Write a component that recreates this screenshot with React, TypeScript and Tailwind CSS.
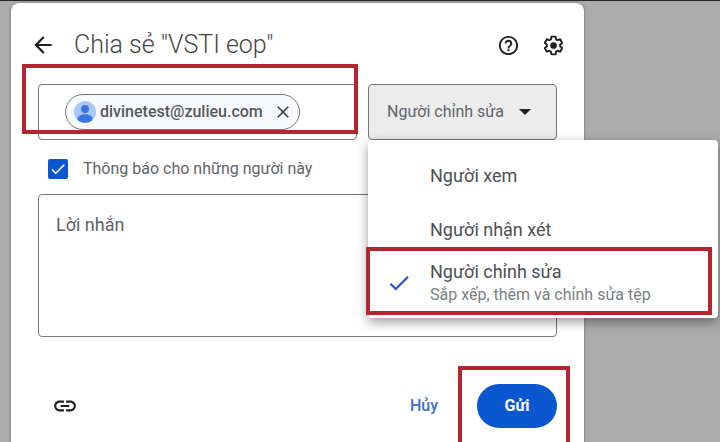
import React, { useState } from 'react';

const roles = [
  { id: 'viewer', name: 'Người xem' },
  { id: 'commenter', name: 'Người nhận xét' },
  { id: 'editor', name: 'Người chỉnh sửa', hint: 'Sắp xếp, thêm và chỉnh sửa tệp' },
];

interface IconProps {
  path: string;
  className?: string;
}

const Icon: React.FC<IconProps> = ({ path, className }) => (
  <svg viewBox="0 0 24 24" fill="currentColor" aria-hidden="true" className={className}>
    <path d={path} />
  </svg>
);

const BACK = 'M20 11H7.83l5.59-5.59L12 4l-8 8 8 8 1.41-1.41L7.83 13H20v-2z';
const HELP =
  'M11 18h2v-2h-2v2zm1-16C6.48 2 2 6.48 2 12s4.48 10 10 10 10-4.48 10-10S17.52 2 12 2zm0 18c-4.41 0-8-3.59-8-8s3.59-8 8-8 8 3.59 8 8-3.59 8-8 8zm0-14c-2.21 0-4 1.79-4 4h2c0-1.1.9-2 2-2s2 .9 2 2c0 2-3 1.75-3 5h2c0-2.25 3-2.5 3-5 0-2.21-1.79-4-4-4z';
const GEAR =
  'M13.85 22.25h-3.7c-.74 0-1.36-.54-1.45-1.27l-.27-1.89c-.27-.14-.53-.29-.79-.46l-1.8.72c-.7.26-1.47-.03-1.81-.65L2.2 15.53c-.35-.66-.2-1.44.36-1.88l1.53-1.19c-.01-.15-.02-.3-.02-.46 0-.15.01-.31.02-.46l-1.52-1.19c-.59-.45-.74-1.26-.37-1.88l1.85-3.19c.34-.62 1.11-.9 1.79-.63l1.81.73c.26-.17.52-.32.78-.46l.27-1.91c.09-.7.71-1.25 1.44-1.25h3.7c.74 0 1.36.54 1.45 1.27l.27 1.89c.27.14.53.29.79.46l1.8-.72c.71-.26 1.48.03 1.82.65l1.84 3.18c.36.66.2 1.44-.36 1.88l-1.52 1.19c.01.15.02.3.02.46s-.01.31-.02.46l1.52 1.19c.56.45.72 1.23.37 1.86l-1.86 3.22c-.34.62-1.11.9-1.8.63l-1.8-.72c-.26.17-.52.32-.78.46l-.27 1.91c-.1.68-.72 1.22-1.46 1.22zm-3.23-2h2.76l.37-2.55.53-.22c.44-.18.88-.44 1.34-.78l.45-.34 2.38.96 1.38-2.4-2.03-1.58.07-.56c.03-.26.06-.51.06-.78s-.03-.53-.06-.78l-.07-.56 2.03-1.58-1.39-2.4-2.39.96-.45-.35c-.42-.32-.87-.58-1.33-.77l-.52-.22-.37-2.55h-2.76l-.37 2.55-.53.21c-.44.19-.88.44-1.34.79l-.45.33-2.38-.95-1.39 2.39 2.03 1.58-.07.56a7 7 0 0 0-.06.79c0 .26.02.53.06.78l.07.56-2.03 1.58 1.38 2.4 2.39-.96.45.35c.43.33.86.58 1.33.77l.53.22.38 2.55zM12 8.5a3.5 3.5 0 1 0 0 7 3.5 3.5 0 1 0 0-7z';
const LINK =
  'M3.9 12c0-1.71 1.39-3.1 3.1-3.1h4V7H7c-2.76 0-5 2.24-5 5s2.24 5 5 5h4v-1.9H7c-1.71 0-3.1-1.39-3.1-3.1zM8 13h8v-2H8v2zm9-6h-4v1.9h4c1.71 0 3.1 1.39 3.1 3.1s-1.39 3.1-3.1 3.1h-4V17h4c2.76 0 5-2.24 5-5s-2.24-5-5-5z';
const CLOSE =
  'M19 6.41L17.59 5 12 10.59 6.41 5 5 6.41 10.59 12 5 17.59 6.41 19 12 13.41 17.59 19 19 17.59 13.41 12z';
const CHECK = 'M9 16.17L4.83 12l-1.42 1.41L9 19 21 7l-1.41-1.41z';
const CARET = 'M6 9l6 6 6-6z';

const Avatar = () => (
  <svg viewBox="0 0 22 22" aria-hidden="true" className="size-[22px] shrink-0">
    <circle cx="11" cy="11" r="11" fill="#a8c7fa" />
    <circle cx="11" cy="8" r="4" fill="#3b74dd" />
    <ellipse cx="11" cy="17.5" rx="7.5" ry="4.3" fill="#3b74dd" />
  </svg>
);

// Red frame laid over the part of the dialog to point at
const Highlight: React.FC<{ className: string }> = ({ className }) => (
  <div className={`pointer-events-none absolute border-4 border-[#b3252f] ${className}`} />
);

export default function App() {
  const [role, setRole] = useState('editor');
  const [notify, setNotify] = useState(true);

  return (
    <div className="h-screen overflow-hidden border-t border-[#2b2529] bg-[#ababab] pt-0.5 pr-[136px] pl-[11px] font-[Roboto,sans-serif] text-[#444746]">
      <main className="min-h-screen rounded-t-lg bg-white px-[27px] pt-[22px] shadow-[0_0_3px_rgba(0,0,0,0.4)]">
        <header className="flex h-10 items-center">
          <button type="button" aria-label="Quay lại" className="-ml-2 text-[#1f1f1f]">
            <Icon path={BACK} className="size-[26px]" />
          </button>
          <h1 className="ml-[18px] flex-1 text-[25px] leading-8 font-light">Chia sẻ "VSTI eop"</h1>
          <div className="-mr-2 flex gap-[22px] pl-4 text-[#1f1f1f]">
            <button type="button" aria-label="Trợ giúp">
              <Icon path={HELP} className="size-[23px]" />
            </button>
            <button type="button" aria-label="Cài đặt">
              <Icon path={GEAR} className="size-[23px]" />
            </button>
          </div>
        </header>

        <div className="mt-[19px] flex gap-[11px]">
          <div className="relative flex h-14 min-w-0 flex-1 items-center rounded border border-[#747775] px-[26px]">
            <div className="flex h-9 shrink-0 items-center rounded-full border border-[#747775] bg-[#f7f9fc] pr-1.5 pl-2">
              <Avatar />
              <span className="ml-1 text-base font-medium text-[#55585b]">divinetest@zulieu.com</span>
              <button type="button" aria-label="Xóa divinetest@zulieu.com" className="ml-2.5">
                <Icon path={CLOSE} className="size-5" />
              </button>
            </div>
            <input type="email" aria-label="Thêm người" className="min-w-0 flex-1 outline-none" />
            <Highlight className="-top-[21px] -right-0.5 bottom-[5px] -left-[17px]" />
          </div>

          <div className="relative w-[189px] shrink-0">
            <select
              aria-label="Vai trò"
              value={role}
              onChange={(e) => setRole(e.target.value)}
              className="h-14 w-full appearance-none rounded border border-[#747775] bg-[#ececec] pr-12 pl-[18px] text-base text-[#5f6368]"
            >
              {roles.map((r) => (
                <option key={r.id} value={r.id}>
                  {r.name}
                </option>
              ))}
            </select>
            <Icon
              path={CARET}
              className="pointer-events-none absolute top-4 right-5 size-6 text-[#1f1f1f]"
            />

            <div className="absolute top-full left-0 z-10 w-[350px] rounded bg-white py-2 shadow-[0_4px_12px_rgba(0,0,0,0.4)]">
              <ul>
                {roles.map((r) => (
                  <li key={r.id}>
                    <button
                      type="button"
                      onClick={() => setRole(r.id)}
                      className="flex h-[54px] w-full items-center text-left"
                    >
                      <span className="flex w-[62px] justify-center">
                        {role === r.id && <Icon path={CHECK} className="size-[26px] text-[#1f50d8]" />}
                      </span>
                      <span>
                        <span className="block text-lg leading-[23px] text-[#4d5053]">{r.name}</span>
                        {r.hint && (
                          <span className="block text-base leading-[23px] text-[#7a7e82]">{r.hint}</span>
                        )}
                      </span>
                    </button>
                  </li>
                ))}
              </ul>
              <Highlight className="right-1.5 bottom-[3px] -left-0.5 h-[68px]" />
            </div>
          </div>
        </div>

        <label className="mt-[19px] ml-2.5 flex h-5 items-center gap-[15px]">
          <span className="relative size-5">
            <input
              type="checkbox"
              checked={notify}
              onChange={(e) => setNotify(e.target.checked)}
              className="peer block size-5 appearance-none rounded-xs border-2 border-[#444746] checked:border-[#0b57d0] checked:bg-[#0b57d0]"
            />
            <Icon
              path={CHECK}
              className="pointer-events-none absolute inset-0 hidden size-5 p-px text-white peer-checked:block"
            />
          </span>
          <span className="text-base text-[#5f6368]">Thông báo cho những người này</span>
        </label>

        <textarea
          aria-label="Lời nhắn"
          placeholder="Lời nhắn"
          className="mt-[15px] block h-[143px] w-full resize-none rounded border border-[#747775] px-[17px] py-[18px] text-lg leading-6 placeholder:text-[#5f6368]"
        />

        <footer className="mt-[47px] flex items-center">
          <button type="button" aria-label="Sao chép đường liên kết" className="ml-3.5 text-[#1f1f1f]">
            <Icon path={LINK} className="size-[26px]" />
          </button>
          <button type="button" className="mr-[39px] ml-auto text-base font-medium text-[#3b6fd4]">
            Hủy
          </button>
          <div className="relative">
            <button
              type="submit"
              className="h-11 w-20 rounded-full bg-[#0b57d0] text-base font-bold text-white"
            >
              Gửi
            </button>
            <Highlight className="-top-[18px] -right-[13px] -bottom-[18px] -left-[19px]" />
          </div>
        </footer>
      </main>
    </div>
  );
}
